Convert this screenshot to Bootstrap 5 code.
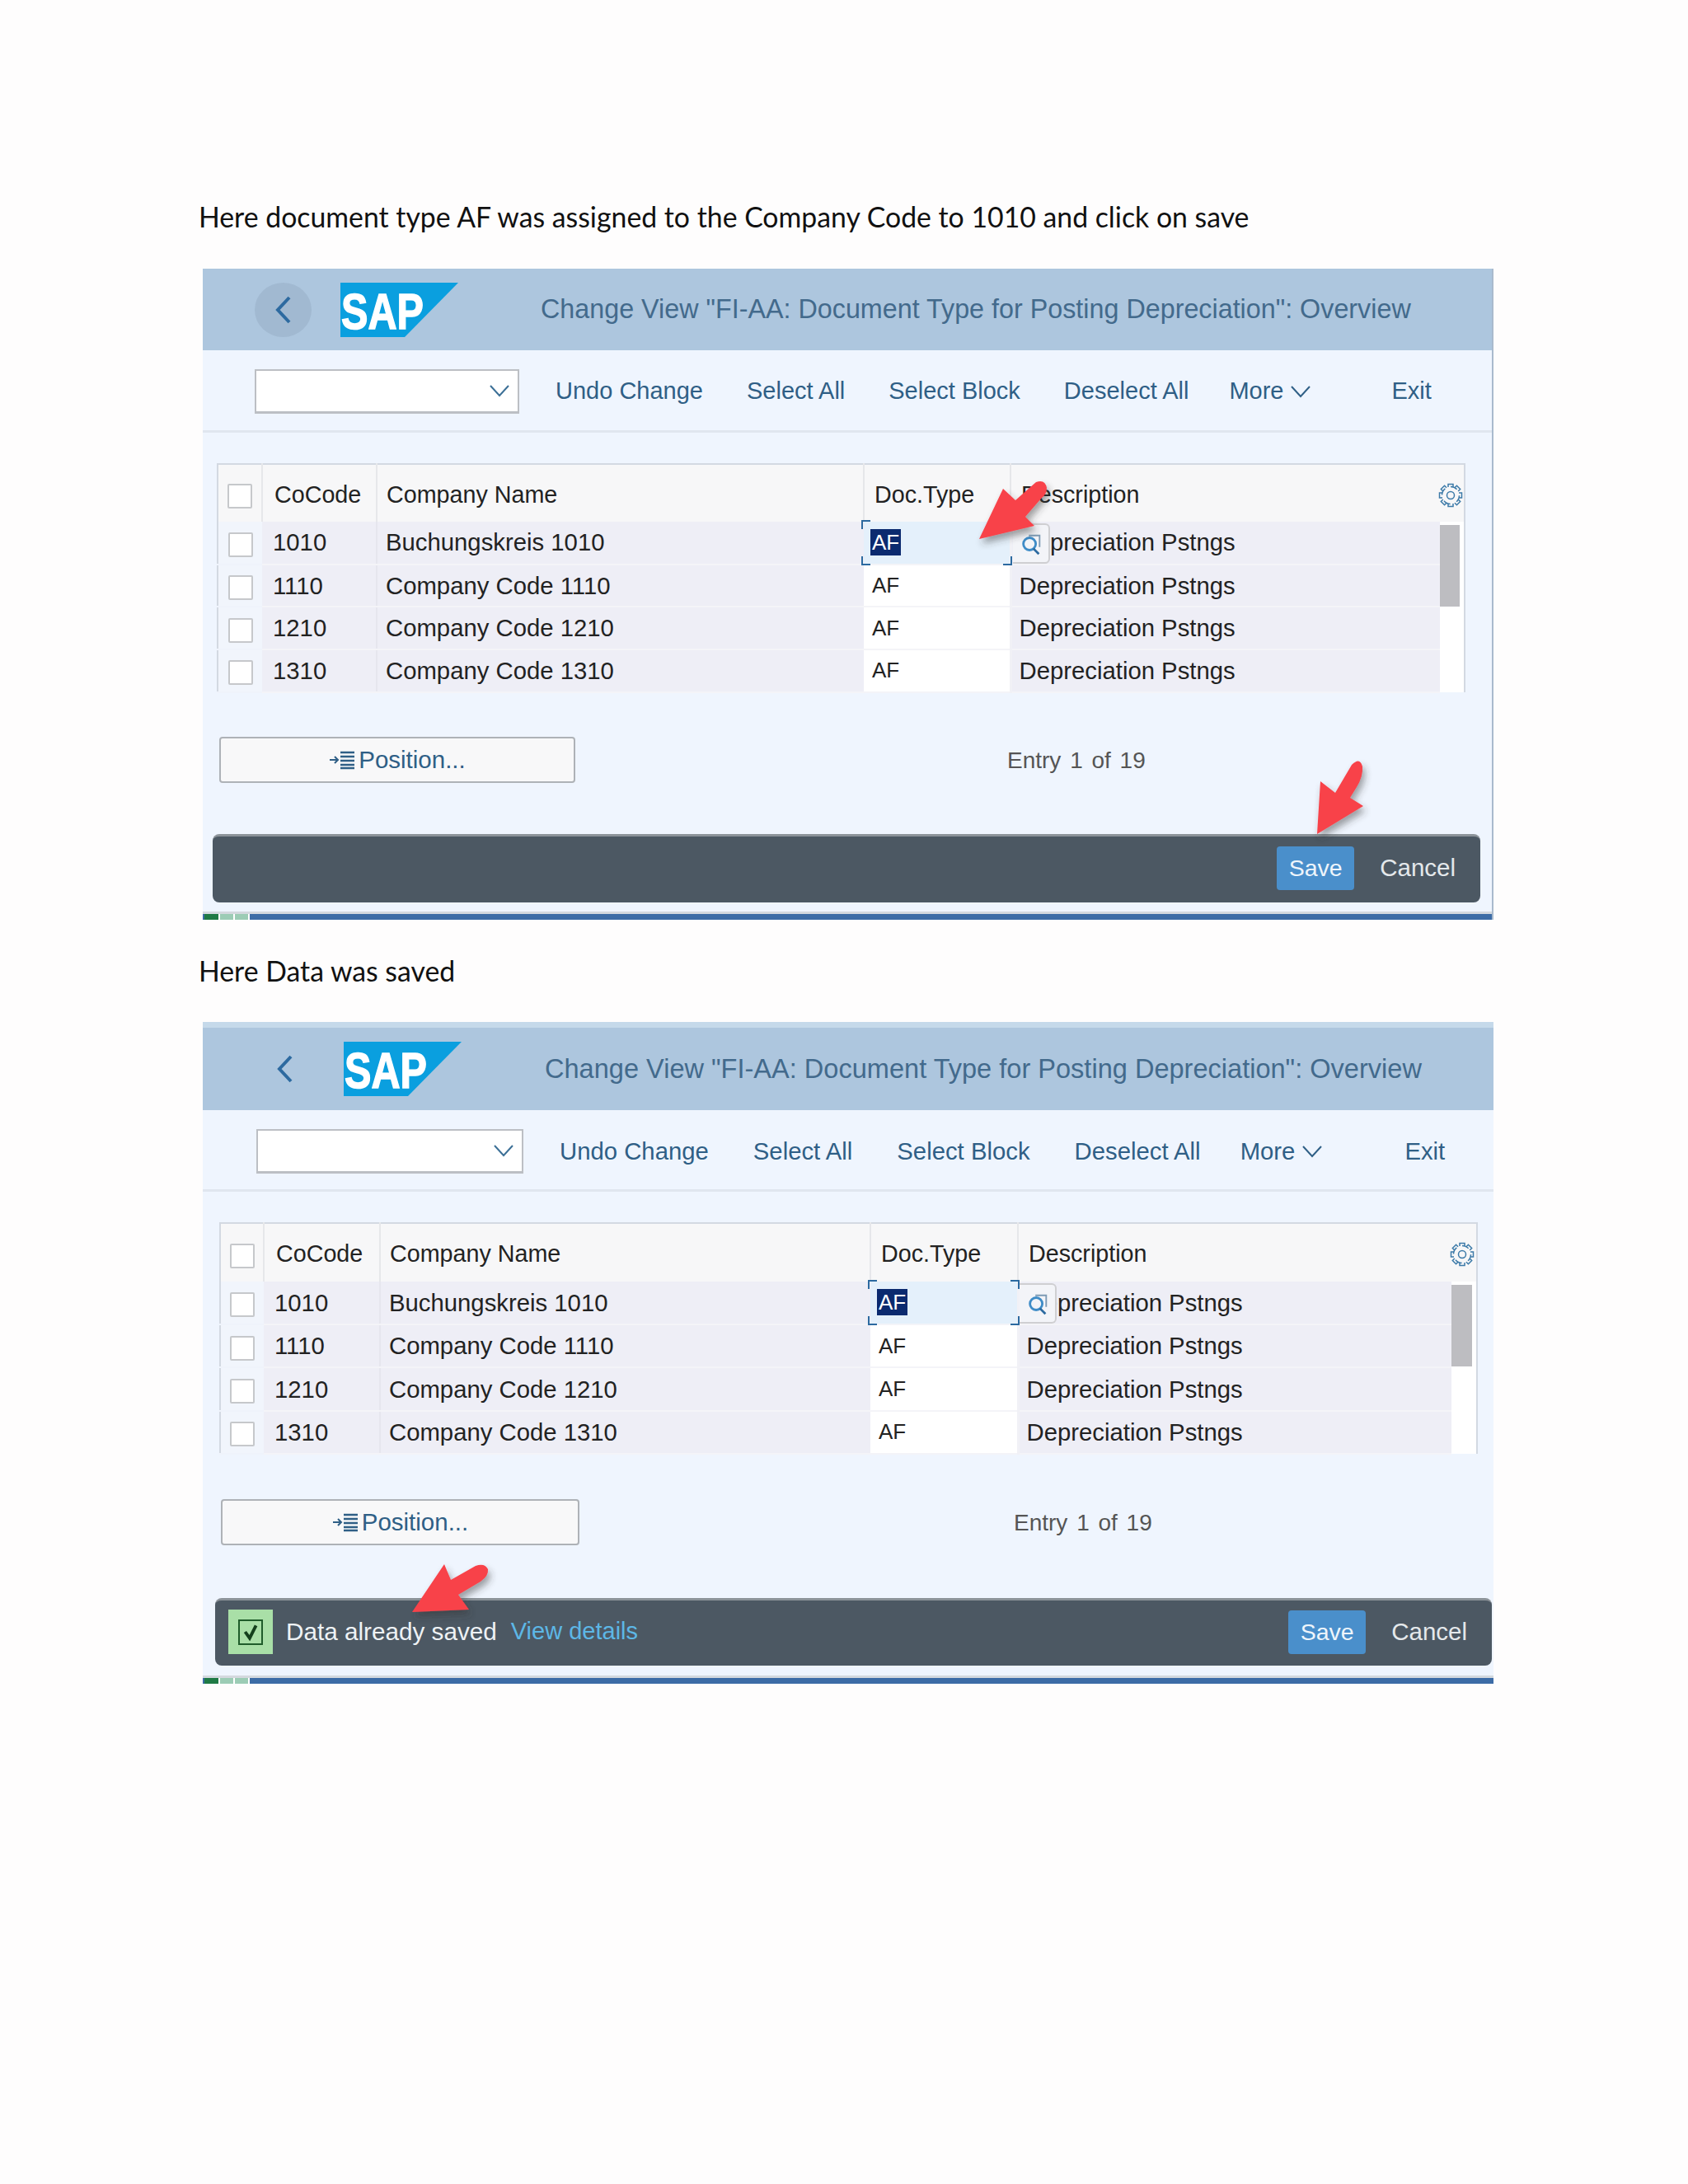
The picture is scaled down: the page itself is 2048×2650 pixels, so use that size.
<!DOCTYPE html>
<html lang="en">
<head>
<meta charset="utf-8">
<title>SAP document type assignment</title>
<link href="https://cdn.jsdelivr.net/npm/bootstrap@5.3.0/dist/css/bootstrap.min.css" rel="stylesheet">
<style>
body{background:#fefdfd;font-family:"Liberation Sans",Arial,sans-serif;color:#222;padding:239px 236px 0 241px;min-height:2650px;}
.note-line{font-family:Lato,"Open Sans",sans-serif;font-size:33.8px;line-height:48px;color:#111;margin:0;}
.note-second{margin-top:38px;}
.sap-panel{position:relative;margin-left:5px;width:1566px;background:#eff5fe;}
.pv-a{margin-top:39px;border-right:2px solid #a9bacd;height:790px;--rowh:51.7px;--headh:70px;}
.pv-b{margin-top:38px;height:803px;--rowh:52.2px;--headh:71px;}
.arrow-layer{position:absolute;left:0;top:0;pointer-events:none;z-index:5;overflow:visible;}
.sap-head{background:#adc6de;height:99px;padding-left:63px;}
.pv-b .sap-head{height:107px;border-top:7px solid #c5d9ea;padding-left:65px;}
.back-btn{width:69px;height:66px;border-radius:50%;background:#a1b9d1;flex:none;}
.pv-b .back-btn{background:transparent;width:69px;}
.sap-logo{flex:none;margin-left:35px;margin-bottom:-6px;}
.pv-b .sap-logo{margin-left:37px;}
.sap-title{font-size:32.3px;color:#436a8c;margin-left:100px;white-space:nowrap;}
.pv-b .sap-title{margin-left:101px;font-size:32.55px;}
.sap-tools{height:100px;padding:2px 0 0 63px;border-bottom:3px solid #e0e6ef;}
.pv-b .sap-tools{height:99px;padding:3px 0 0 65px;}
.tool-select{width:321px;height:54px;background:#fff;border:2px solid #bcbfc4;border-bottom-width:3px;flex:none;padding-right:9px;margin-right:44px;}
.pv-b .tool-select{width:324px;margin-right:44px;}
.tool-link{font-size:29px;color:#2f5f86;white-space:nowrap;margin-right:53px;}
.pv-b .tool-link{margin-right:54px;font-size:29.3px;}
.tool-tight{margin-right:49px;}
.pv-b .tool-tight{margin-right:48px;}
.tool-more{margin-right:97px;}
.pv-b .tool-more{margin-right:99px;}
.sap-body{padding:37px 0 0 17px;}
.pv-b .sap-body{padding:37px 0 0 20px;}
.sap-grid.table{table-layout:fixed;width:auto;margin:0;border-top:2px solid #d3d9e2;border-left:2px solid #d3d9e2;border-right:2px solid #d3d9e2;border-bottom:0;font-size:29.3px;}
.sap-grid.table th,.sap-grid.table td{padding:0;border:0;box-shadow:none;height:var(--rowh);vertical-align:middle;white-space:nowrap;color:#222;font-weight:400;}
.sap-grid.table thead th{height:var(--headh);padding-top:4px;background:#f7f7f8;border-right:2px solid #e6e7ea;font-size:28.7px;}
.sap-grid.table thead th.gear-cell,.sap-grid.table thead th.desc-head{border-right:0;}
.sap-grid.table td{background:#eeeef6;border-bottom:2px solid #f4f4f8;}
.sap-grid.table td.chk-cell{background:#f1f5fc;text-align:center;border-bottom-color:#eff3fb;}
.sap-grid.table thead th.chk-cell{text-align:center;}
.sap-grid.table td.code-cell{padding-left:13px;border-right:2px solid #e6e6ee;}
.sap-grid.table th.code-cell{padding-left:14px;}
.sap-grid.table td.name-cell{padding-left:10px;}
.sap-grid.table th.name-cell{padding-left:11px;}
.sap-grid.table th.doc-cell{padding-left:12px;}
.sap-grid.table td.doc-cell{background:#fff;padding-left:10px;font-size:26px;border-right:3px solid #f1f1f6;}
.sap-grid.table td.doc-focus{background:#e4f0fb;position:relative;overflow:visible;}
.sap-grid.table td.desc-cell{padding-left:9px;}
.sap-grid.table th.desc-head{padding-left:12px;}
.sap-grid.table td.scroll-cell{background:#fff;vertical-align:top;border:0;padding:4px 5px 0 0;}
.scroll-thumb{height:99px;background:#bdbdc1;}
.sap-check.form-check-input{width:30px;height:30px;margin:0;border:2px solid #c6c8cb;border-radius:2px;background-color:#fff;float:none;vertical-align:middle;}
.sel-text{background:#0b2a6f;color:#fff;padding:1px 2px;margin-left:-2px;}
.crn{position:absolute;width:11px;height:11px;border:0 solid #2c6aa0;}
.crn-tl{left:-3px;top:-2px;border-width:2px 0 0 2px;}
.crn-bl{left:-3px;bottom:-2px;border-width:0 0 2px 2px;}
.crn-tr{right:-3px;top:-2px;border-width:2px 2px 0 0;}
.crn-br{right:-3px;bottom:-2px;border-width:0 2px 2px 0;}
.value-help{position:absolute;left:181px;top:2px;width:45px;height:49px;background:#f3f4f8;border:2px solid #cfcfd2;border-left:0;border-radius:0 6px 6px 0;z-index:2;}
.sap-pos-row{margin-top:53px;padding-left:3px;}
.pv-b .sap-pos-row{margin-top:54px;padding-left:2px;}
.pos-btn.btn{width:432px;height:56px;background:#f8f8f9;border:2px solid #aeb2b7;border-radius:4px;color:#2f5f86;font-size:29.5px;padding:0;flex:none;}
.pos-btn.btn:hover{background:#f8f8f9;color:#2f5f86;}
.entry-text{font-size:28px;color:#555;margin-left:524px;word-spacing:3px;padding-top:3px;}
.pv-b .entry-text{margin-left:527px;}
.pv-b .pos-btn.btn{width:435px;}
.sap-foot{position:absolute;left:12px;top:686px;width:1538px;height:83px;background:#4c5863;border-top:3px solid #8c9399;border-radius:8px;padding:0 30px 3px 15px;}
.pv-b .sap-foot{left:15px;top:699px;width:1549px;height:82px;padding:0 30px 3px 16px;}
.ok-box{width:54px;height:54px;background:#a9dfa7;flex:none;}
.ok-inner{width:30px;height:31px;border:2px solid #1f5c2a;}
.saved-text{font-size:29.7px;color:#eef2f5;margin-left:16px;}
.view-link{font-size:29px;color:#5db7e6;margin-left:17px;text-decoration:none;}
.save-btn.btn{width:94px;height:53px;padding:0;background:#4a8fcb;border:0;border-radius:4px;color:#eef5fb;font-size:28.5px;}
.cancel-btn.btn{padding:0;border:0;color:#e4e8eb;font-size:29.5px;margin-left:31px;background:transparent;}
.sap-status{position:absolute;left:0;right:0;bottom:0;height:7px;background:#3c6ca6;}
.sap-status::before{content:"";position:absolute;left:0;right:0;top:-3px;height:3px;background:#d4d9df;}
.status-steps{position:absolute;left:2px;top:0;height:7px;width:55px;background:linear-gradient(90deg,#1f7a45 0 17px,#fff 17px 19px,#9cccb5 19px 35px,#fff 35px 37px,#9cccb5 37px 53px,#fff 53px);}
</style>
</head>
<body>
<svg width="0" height="0" class="position-absolute">
<symbol id="gear-ico" viewBox="0 0 32 32"><g fill="none" stroke="#3c7aa8" stroke-width="1.500"><circle cx="16" cy="16" r="4.500"/><path stroke-dasharray="8.500 8" d="M16 5.500A10.500 10.500 0 1 1 15.990 5.500"/>
<path d="M13 6V2.500H19V6"/><path transform="rotate(45 16 16)" d="M13 6V2.500H19V6"/><path transform="rotate(90 16 16)" d="M13 6V2.500H19V6"/><path transform="rotate(135 16 16)" d="M13 6V2.500H19V6"/><path transform="rotate(180 16 16)" d="M13 6V2.500H19V6"/><path transform="rotate(225 16 16)" d="M13 6V2.500H19V6"/><path transform="rotate(270 16 16)" d="M13 6V2.500H19V6"/><path transform="rotate(315 16 16)" d="M13 6V2.500H19V6"/></g></symbol>
<symbol id="help-ico" viewBox="0 0 32 32"><path d="M13 5H27V20" fill="none" stroke="#7d9ab4" stroke-width="2"/><circle cx="14" cy="16" r="8" fill="none" stroke="#3f8cc7" stroke-width="3"/><path d="M19 22L26 29" stroke="#2c6aa0" stroke-width="3"/></symbol>
<symbol id="pos-ico" viewBox="0 0 32 24"><path d="M1 12H10M7 8L11 12L7 16" fill="none" stroke="#2f5f86" stroke-width="2"/><path d="M14 3H31M14 8H31M14 13H31M14 18H31M14 22H31" stroke="#2f5f86" stroke-width="2.500"/></symbol>
<symbol id="chev-down" viewBox="0 0 26 16"><path d="M2 2L13 14L24 2" fill="none" stroke-width="2" stroke="currentColor"/></symbol>
</svg>

<p class="note-line">Here document type AF was assigned to the Company Code to 1010 and click on save</p>

<section class="sap-panel pv-a">
  <div class="sap-head d-flex align-items-center">
    <div class="back-btn d-flex align-items-center justify-content-center"><svg width="20" height="34" viewBox="0 0 20 34"><path d="M17 2L3 17L17 32" fill="none" stroke="#2d6aa0" stroke-width="4"/></svg></div>
    <svg class="sap-logo" width="143" height="72" viewBox="0 0 143 72"><polygon points="0,0 143,0 78,66 0,66" fill="#0a9fdf"/><text x="1" y="56" font-family="Liberation Sans" font-weight="700" font-size="62" fill="#fff" stroke="#fff" stroke-width="1.500" textLength="100" lengthAdjust="spacingAndGlyphs">SAP</text></svg>
    <div class="sap-title">Change View "FI-AA: Document Type for Posting Depreciation": Overview</div>
  </div>
  <div class="sap-tools d-flex align-items-center">
    <div class="tool-select d-flex align-items-center justify-content-end"><svg width="26" height="16" style="color:#3b6f96"><use href="#chev-down"/></svg></div>
    <span class="tool-link">Undo Change</span><span class="tool-link">Select All</span><span class="tool-link">Select Block</span><span class="tool-link tool-tight">Deselect All</span>
    <span class="tool-link tool-more d-inline-flex align-items-center gap-2">More <svg width="26" height="16" style="color:#2f5f86"><use href="#chev-down"/></svg></span>
    <span class="tool-link m-0">Exit</span>
  </div>
  <div class="sap-body">
    <table class="table sap-grid">
      <colgroup><col style="width:54px"><col style="width:139px"><col style="width:591px"><col style="width:178px"><col style="width:521px"><col style="width:30px"></colgroup>
      <thead><tr>
        <th class="chk-cell"><input class="form-check-input sap-check" type="checkbox" aria-label="All"></th>
        <th class="code-cell">CoCode</th><th class="name-cell">Company Name</th><th class="doc-cell">Doc.Type</th><th class="desc-head">Description</th>
        <th class="gear-cell"><svg width="32" height="32" class="d-block" style="margin-left:-3px"><use href="#gear-ico"/></svg></th>
      </tr></thead>
      <tbody>
        <tr><td class="chk-cell"><input class="form-check-input sap-check" type="checkbox" aria-label="1010"></td><td class="code-cell">1010</td><td class="name-cell">Buchungskreis 1010</td>
          <td class="doc-cell doc-focus"><span class="sel-text">AF</span><i class="crn crn-tl"></i><i class="crn crn-tr"></i><i class="crn crn-bl"></i><i class="crn crn-br"></i><span class="value-help d-flex align-items-center justify-content-center"><svg width="30" height="30"><use href="#help-ico"/></svg></span></td>
          <td class="desc-cell">Depreciation Pstngs</td><td class="scroll-cell" rowspan="4"><div class="scroll-thumb"></div></td></tr>
        <tr><td class="chk-cell"><input class="form-check-input sap-check" type="checkbox" aria-label="1110"></td><td class="code-cell">1110</td><td class="name-cell">Company Code 1110</td><td class="doc-cell">AF</td><td class="desc-cell">Depreciation Pstngs</td></tr>
        <tr><td class="chk-cell"><input class="form-check-input sap-check" type="checkbox" aria-label="1210"></td><td class="code-cell">1210</td><td class="name-cell">Company Code 1210</td><td class="doc-cell">AF</td><td class="desc-cell">Depreciation Pstngs</td></tr>
        <tr><td class="chk-cell"><input class="form-check-input sap-check" type="checkbox" aria-label="1310"></td><td class="code-cell">1310</td><td class="name-cell">Company Code 1310</td><td class="doc-cell">AF</td><td class="desc-cell">Depreciation Pstngs</td></tr>
      </tbody>
    </table>
    <div class="sap-pos-row d-flex align-items-center">
      <button class="btn pos-btn d-inline-flex align-items-center justify-content-center gap-1" type="button"><svg width="32" height="24"><use href="#pos-ico"/></svg> Position...</button>
      <span class="entry-text">Entry 1 of 19</span>
    </div>
  </div>
  <div class="sap-foot d-flex align-items-center justify-content-end">
    <button class="btn save-btn" type="button">Save</button><button class="btn cancel-btn" type="button">Cancel</button>
  </div>
  <div class="sap-status"><span class="status-steps"></span></div>
  <svg class="arrow-layer" width="1566" height="790"><defs><filter id="arrow-shade" x="-30%" y="-30%" width="170%" height="170%"><feDropShadow dx="3" dy="6" stdDeviation="4" flood-color="#333" flood-opacity=".45"/></filter></defs>
    <g transform="translate(-246 -326)" filter="url(#arrow-shade)" fill="#f8424a">
      <path d="M1188 654L1217 593L1232 607L1257 585Q1268 581 1270 592Q1270 600 1263 605L1244 627L1255 638Z"/>
      <path d="M1598 1012L1602 948L1620 962L1640 928Q1650 918 1653 930Q1654 942 1646 955L1638 968L1654 978Z"/>
    </g>
  </svg>
</section>

<p class="note-line note-second">Here Data was saved</p>

<section class="sap-panel pv-b">
  <div class="sap-head d-flex align-items-center">
    <div class="back-btn d-flex align-items-center justify-content-center"><svg width="20" height="34" viewBox="0 0 20 34"><path d="M17 2L3 17L17 32" fill="none" stroke="#2d6aa0" stroke-width="4"/></svg></div>
    <svg class="sap-logo" width="143" height="72" viewBox="0 0 143 72"><polygon points="0,0 143,0 78,66 0,66" fill="#0a9fdf"/><text x="1" y="56" font-family="Liberation Sans" font-weight="700" font-size="62" fill="#fff" stroke="#fff" stroke-width="1.500" textLength="100" lengthAdjust="spacingAndGlyphs">SAP</text></svg>
    <div class="sap-title">Change View "FI-AA: Document Type for Posting Depreciation": Overview</div>
  </div>
  <div class="sap-tools d-flex align-items-center">
    <div class="tool-select d-flex align-items-center justify-content-end"><svg width="26" height="16" style="color:#3b6f96"><use href="#chev-down"/></svg></div>
    <span class="tool-link">Undo Change</span><span class="tool-link">Select All</span><span class="tool-link">Select Block</span><span class="tool-link tool-tight">Deselect All</span>
    <span class="tool-link tool-more d-inline-flex align-items-center gap-2">More <svg width="26" height="16" style="color:#2f5f86"><use href="#chev-down"/></svg></span>
    <span class="tool-link m-0">Exit</span>
  </div>
  <div class="sap-body">
    <table class="table sap-grid">
      <colgroup><col style="width:53px"><col style="width:141px"><col style="width:595px"><col style="width:179px"><col style="width:526px"><col style="width:31px"></colgroup>
      <thead><tr>
        <th class="chk-cell"><input class="form-check-input sap-check" type="checkbox" aria-label="All"></th>
        <th class="code-cell">CoCode</th><th class="name-cell">Company Name</th><th class="doc-cell">Doc.Type</th><th class="desc-head">Description</th>
        <th class="gear-cell"><svg width="32" height="32" class="d-block" style="margin-left:-3px"><use href="#gear-ico"/></svg></th>
      </tr></thead>
      <tbody>
        <tr><td class="chk-cell"><input class="form-check-input sap-check" type="checkbox" aria-label="1010"></td><td class="code-cell">1010</td><td class="name-cell">Buchungskreis 1010</td>
          <td class="doc-cell doc-focus"><span class="sel-text">AF</span><i class="crn crn-tl"></i><i class="crn crn-tr"></i><i class="crn crn-bl"></i><i class="crn crn-br"></i><span class="value-help d-flex align-items-center justify-content-center"><svg width="30" height="30"><use href="#help-ico"/></svg></span></td>
          <td class="desc-cell">Depreciation Pstngs</td><td class="scroll-cell" rowspan="4"><div class="scroll-thumb"></div></td></tr>
        <tr><td class="chk-cell"><input class="form-check-input sap-check" type="checkbox" aria-label="1110"></td><td class="code-cell">1110</td><td class="name-cell">Company Code 1110</td><td class="doc-cell">AF</td><td class="desc-cell">Depreciation Pstngs</td></tr>
        <tr><td class="chk-cell"><input class="form-check-input sap-check" type="checkbox" aria-label="1210"></td><td class="code-cell">1210</td><td class="name-cell">Company Code 1210</td><td class="doc-cell">AF</td><td class="desc-cell">Depreciation Pstngs</td></tr>
        <tr><td class="chk-cell"><input class="form-check-input sap-check" type="checkbox" aria-label="1310"></td><td class="code-cell">1310</td><td class="name-cell">Company Code 1310</td><td class="doc-cell">AF</td><td class="desc-cell">Depreciation Pstngs</td></tr>
      </tbody>
    </table>
    <div class="sap-pos-row d-flex align-items-center">
      <button class="btn pos-btn d-inline-flex align-items-center justify-content-center gap-1" type="button"><svg width="32" height="24"><use href="#pos-ico"/></svg> Position...</button>
      <span class="entry-text">Entry 1 of 19</span>
    </div>
  </div>
  <div class="sap-foot d-flex align-items-center">
    <div class="ok-box d-flex align-items-center justify-content-center"><div class="ok-inner d-flex align-items-center justify-content-center"><svg width="20" height="22" viewBox="0 0 18 20"><path d="M3 10L8 17L15 3" fill="none" stroke="#14401c" stroke-width="3.500"/></svg></div></div>
    <span class="saved-text">Data already saved</span><a class="view-link" href="#">View details</a>
    <button class="btn save-btn ms-auto" type="button">Save</button><button class="btn cancel-btn" type="button">Cancel</button>
  </div>
  <div class="sap-status"><span class="status-steps"></span></div>
  <svg class="arrow-layer" width="1566" height="803"><g transform="translate(-246 -1240)" filter="url(#arrow-shade)" fill="#f8424a">
      <path d="M500 1956L539 1898L547 1917L577 1900Q588 1896 592 1904Q593 1912 583 1919L556 1935L569 1953Z"/>
    </g></svg>
</section>
</body>
</html>
